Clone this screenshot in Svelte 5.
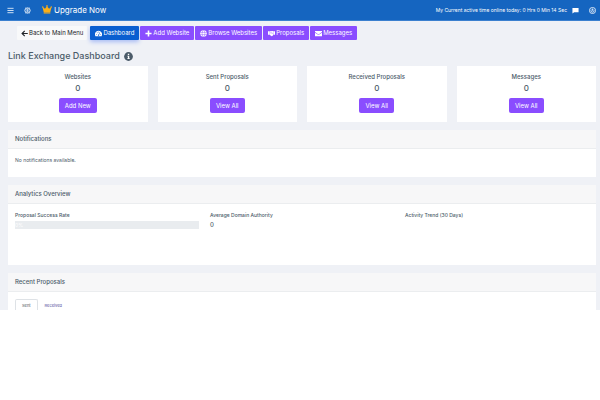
<script lang="ts">
	type Tab = 'sent' | 'received';

	const navItems = [
		{ label: 'Dashboard', icon: 'gauge', active: true },
		{ label: 'Add Website', icon: 'plus', active: false },
		{ label: 'Browse Websites', icon: 'globe', active: false },
		{ label: 'Proposals', icon: 'handshake', active: false },
		{ label: 'Messages', icon: 'envelope', active: false }
	];

	const stats = [
		{ title: 'Websites', value: 0, action: 'Add New' },
		{ title: 'Sent Proposals', value: 0, action: 'View All' },
		{ title: 'Received Proposals', value: 0, action: 'View All' },
		{ title: 'Messages', value: 0, action: 'View All' }
	];

	const successRate = 0;
	let tab = $state<Tab>('sent');
</script>

{#snippet icon(name: string)}
	<svg class="icon" viewBox="0 0 16 16" aria-hidden="true">
		{#if name === 'gauge'}
			<path fill="currentColor" d="M8 2a8 8 0 0 0-7 12h14A8 8 0 0 0 8 2z" />
			<g fill="#0a5fd0">
				<circle cx="3.5" cy="10" r="1" />
				<circle cx="5" cy="6.3" r="1" />
				<circle cx="8" cy="4.5" r="1" />
				<circle cx="12.7" cy="10" r="1" />
				<path d="M10.7 5l1 .5-2.2 5A2 2 0 0 1 9 13H7a2 2 0 0 1 1.2-3z" />
			</g>
		{:else if name === 'plus'}
			<path fill="currentColor" d="M6.2 1h3.6v5.2H15v3.6H9.800V15H6.200V9.800H1V6.200h5.200z" />
		{:else if name === 'globe'}
			<circle cx="8" cy="8" r="7.500" fill="currentColor" />
			<g fill="none" stroke="#8a4dff" stroke-width="1">
				<ellipse cx="8" cy="8" rx="3.200" ry="7.500" />
				<path d="M.5 5.500h15M.5 10.500h15" />
			</g>
		{:else if name === 'handshake'}
			<path
				fill="currentColor"
				d="M0 3h2.500v8H0zM13.500 3H16v8h-2.500zM3 3h2.500L7 2h3l3 1v7.500l-1.500 1.500L10 13.500l-1.500.5L6.500 13 4 11H3z"
			/>
			<path fill="none" stroke="#8a4dff" d="M8 4.500L5.700 6.500l1.300 1 2-1.200 3.500 3.200" />
		{:else if name === 'envelope'}
			<path fill="currentColor" d="M0 2h16v2.500L8 10 0 4.500zM0 6.200l8 5.500 8-5.500V14H0z" />
		{:else if name === 'back'}
			<path
				fill="none"
				stroke="currentColor"
				stroke-width="2.600"
				d="M8.500 2L2.500 8l6 6M3 8h12.500"
			/>
		{:else if name === 'menu'}
			<path stroke="currentColor" stroke-width="1.800" d="M1 3h14M1 8h14M1 13h14" />
		{:else if name === 'chip'}
			<circle cx="8" cy="8" r="6" fill="none" stroke="currentColor" stroke-width="2" />
			<path
				fill="none"
				stroke="currentColor"
				d="M5 5.500h6M5 8h6M5 10.500h6M8 3v10M4 1.500L3 0M12 1.500L13 0M4 14.500L3 16M12 14.500l1 1.500"
			/>
		{:else if name === 'crown'}
			<path
				fill="#fbaf17"
				d="M2.700 11L1 4.500a1.200 1.200 0 1 1 1.200-.5l2.500 2L7.300 2.700a1.300 1.300 0 1 1 1.400 0L11.300 6l2.500-2a1.200 1.200 0 1 1 1.200.5L13.300 11zM2.700 11.500h10.600v2H2.700z"
			/>
		{:else if name === 'chat'}
			<path fill="currentColor" d="M1 2h14v10H5l-4 3z" />
		{:else if name === 'power'}
			<circle cx="8" cy="8" r="7" fill="none" stroke="currentColor" stroke-width="1.800" />
			<path
				fill="none"
				stroke="currentColor"
				stroke-width="1.800"
				d="M5.500 6a3.400 3.400 0 1 0 5 0M8 3.500v5"
			/>
		{:else if name === 'info'}
			<circle cx="8" cy="8" r="7.800" fill="currentColor" />
			<path fill="#fff" d="M6.800 3h2.500v2.300H6.800zM6 6.500h3.300V11h1v1.600H5.900V11h1V8H6z" />
		{/if}
	</svg>
{/snippet}

<div class="page">
	<header class="topbar">
		<button type="button" class="icon-button" aria-label="Toggle menu">{@render icon('menu')}</button>
		<button type="button" class="icon-button" aria-label="Assistant">{@render icon('chip')}</button>
		<a class="upgrade" href="#upgrade">{@render icon('crown')} Upgrade Now</a>
		<span class="online">My Current active time online today: 0 Hrs 0 Min 14 Sec</span>
		<button type="button" class="icon-button" aria-label="Chat">{@render icon('chat')}</button>
		<button type="button" class="icon-button" aria-label="Log out">{@render icon('power')}</button>
	</header>

	<main class="content">
		<nav class="nav">
			<a class="nav-link back" href="#main">{@render icon('back')} Back to Main Menu</a>
			{#each navItems as item (item.label)}
				<a class="nav-link" class:active={item.active} href="#{item.icon}">
					{@render icon(item.icon)}
					{item.label}
				</a>
			{/each}
		</nav>

		<h1 class="title">Link Exchange Dashboard {@render icon('info')}</h1>

		<div class="stats">
			{#each stats as stat (stat.title)}
				<section class="stat">
					<h2 class="stat-title">{stat.title}</h2>
					<p class="stat-value">{stat.value}</p>
					<button type="button" class="stat-action">{stat.action}</button>
				</section>
			{/each}
		</div>

		<section class="card">
			<h2 class="card-header">Notifications</h2>
			<div class="card-body">
				<p class="note">No notifications available.</p>
			</div>
		</section>

		<section class="card">
			<h2 class="card-header">Analytics Overview</h2>
			<div class="card-body analytics">
				<div>
					<h3 class="label">Proposal Success Rate</h3>
					<div class="progress" role="progressbar" aria-label="Proposal success rate" aria-valuenow={successRate}>
						<div class="progress-bar" style="width: {successRate}%">{successRate}%</div>
					</div>
				</div>
				<div>
					<h3 class="label">Average Domain Authority</h3>
					<p class="authority">0</p>
				</div>
				<div>
					<h3 class="label">Activity Trend (30 Days)</h3>
				</div>
			</div>
		</section>

		<section class="card">
			<h2 class="card-header">Recent Proposals</h2>
			<div class="tabs" role="tablist">
				<button
					type="button"
					class="tab"
					role="tab"
					aria-selected={tab === 'sent'}
					onclick={() => (tab = 'sent')}>Sent</button
				>
				<button
					type="button"
					class="tab"
					role="tab"
					aria-selected={tab === 'received'}
					onclick={() => (tab = 'received')}>Received</button
				>
			</div>
		</section>
	</main>
</div>

<style>
	:global(body) {
		background: #fff;
	}

	.page {
		font-family: Inter, 'Open Sans', sans-serif;
		font-size: 6px;
		line-height: 8px;
		color: #4b5b69;
		background: #eff1f6;
	}

	h1,
	h2,
	h3,
	p {
		margin: 0;
		font-weight: 500;
	}

	button {
		margin: 0;
		padding: 0;
		border: none;
		background: none;
		font: inherit;
		color: inherit;
		cursor: pointer;
	}

	a {
		color: inherit;
		text-decoration: none;
	}

	.icon {
		display: block;
		flex-shrink: 0;
		width: 7px;
		height: 7px;
	}

	.topbar {
		display: flex;
		align-items: center;
		height: 20px;
		padding: 0 4px 0 7px;
		border-bottom: 1px solid #3b80cf;
		background: #1565c0;
		color: #fff;
	}

	.icon-button {
		margin-right: 10px;
	}

	.icon-button:last-child {
		margin-right: 0;
	}

	.upgrade {
		display: flex;
		align-items: center;
		gap: 2px;
		margin-right: auto;
		padding-left: 1px;
		font-size: 8px;
	}

	.upgrade .icon {
		width: 10px;
		height: 10px;
	}

	.online {
		margin-right: 5px;
		font-size: 5px;
	}

	.content {
		padding: 5px 4px 0 8px;
	}

	.nav {
		display: flex;
		gap: 1px;
		padding-left: 9px;
	}

	.nav-link {
		display: flex;
		align-items: center;
		gap: 1px;
		padding: 3px 5px;
		border-radius: 1px;
		background: #8a4dff;
		color: #fff;
	}

	.nav-link.active {
		background: #0a5fd0;
		box-shadow: 0 2px 4px #a9bcf5;
	}

	.nav-link.back {
		padding: 3px 4px;
		margin-right: 2px;
		background: #f8f9fa;
		color: #212529;
	}

	.title {
		display: flex;
		align-items: center;
		gap: 4px;
		margin: 10px 0 4px;
		font-size: 9px;
		line-height: 12px;
	}

	.title .icon {
		width: 9px;
		height: 9px;
	}

	.stats {
		display: grid;
		grid-template-columns: repeat(4, 1fr);
		gap: 10px;
	}

	.stat {
		display: flex;
		flex-direction: column;
		align-items: center;
		padding: 7px 7px 9px;
		background: #fff;
	}

	.stat-title {
		font-size: 6px;
	}

	.stat-value {
		margin: 1px 0 4px;
		font-size: 8px;
		line-height: 12px;
	}

	.stat-action {
		padding: 4px 6px 3px;
		border-radius: 2px;
		background: #8a4dff;
		color: #fff;
	}

	.card {
		margin-top: 8px;
		background: #fff;
	}

	.card-header {
		padding: 5px 7px;
		border-bottom: 1px solid #ebedef;
		background: #f7f7f8;
		font-size: 6px;
	}

	.card-body {
		padding: 7px 7px 13px;
	}

	.note,
	.label {
		font-size: 5px;
	}

	.note {
		font-weight: 400;
	}

	.analytics {
		display: grid;
		grid-template-columns: repeat(3, 1fr);
		gap: 11px;
		min-height: 41px;
	}

	.progress {
		margin-top: 2px;
		background: #e9ecef;
	}

	.progress-bar {
		color: #fff;
		font-size: 5px;
		line-height: 8px;
	}

	.authority {
		margin-top: 2px;
	}

	.tabs {
		display: flex;
		padding: 7px 7px 0;
	}

	.tab {
		height: 11px;
		padding: 2px 6px 0;
		border: 1px solid transparent;
		border-bottom: none;
		border-radius: 2px 2px 0 0;
		font-size: 4px;
		line-height: 8px;
		color: #4e4a9a;
	}

	.tab[aria-selected='true'] {
		border-color: #dee2e6;
		color: #495057;
	}
</style>
